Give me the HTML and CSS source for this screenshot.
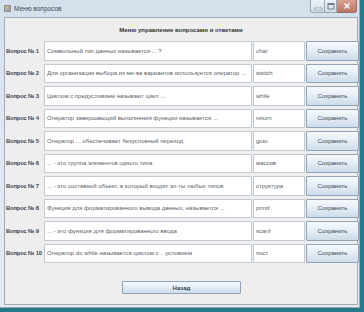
FILE: index.html
```html
<!DOCTYPE html>
<html>
<head>
<meta charset="utf-8">
<title>Меню вопросов</title>
<link rel="stylesheet" href="styles.css">
</head>
<body>
<div class="window">
  <div class="titlebar">
    <span class="app-icon"></span>
    <span class="title">Меню вопросов</span>
    <div class="caption">
      <span class="cb min"><svg width="15" height="13" viewBox="0 0 15 13"><rect x="4" y="8" width="7" height="2" fill="#fff" stroke="#6f7f90" stroke-width="0.6"/></svg></span>
      <span class="cb max"><svg width="12" height="13" viewBox="0 0 12 13"><rect x="3" y="3.5" width="6" height="5.5" fill="none" stroke="#6f7f90" stroke-width="1"/><rect x="3" y="3.5" width="6" height="1.5" fill="#6f7f90"/></svg></span>
      <span class="cb close"><svg width="20" height="13" viewBox="0 0 20 13"><path d="M7.5 3.5 L12.5 8.5 M12.5 3.5 L7.5 8.5" stroke="#fff" stroke-width="1.4"/></svg></span>
    </div>
  </div>
  <div class="client">
    <div class="heading">Меню управление вопросами и ответами</div>
    <div class="grid">
      <div class="label">Вопрос № 1</div><div class="field">Символьный тип данных называется ... ?</div><div class="field">char</div><button class="save">Сохранить</button>
      <div class="label">Вопрос № 2</div><div class="field">Для организации выбора из мн-ва вариантов используется оператор ...</div><div class="field">switch</div><button class="save">Сохранить</button>
      <div class="label">Вопрос № 3</div><div class="field">Циклом с предусловием называют цикл ...</div><div class="field">while</div><button class="save">Сохранить</button>
      <div class="label">Вопрос № 4</div><div class="field">Оператор завершающий выполнения функции называется ...</div><div class="field">return</div><button class="save">Сохранить</button>
      <div class="label">Вопрос № 5</div><div class="field">Оператор ... обеспечивает безусловный переход</div><div class="field">goto</div><button class="save">Сохранить</button>
      <div class="label">Вопрос № 6</div><div class="field">... - это группа элементов одного типа</div><div class="field">массив</div><button class="save">Сохранить</button>
      <div class="label">Вопрос № 7</div><div class="field">... - это составной объект, в который входят эл-ты любых типов</div><div class="field">структура</div><button class="save">Сохранить</button>
      <div class="label">Вопрос № 8</div><div class="field">Функция для форматированного вывода данных, называется ...</div><div class="field">printf</div><button class="save">Сохранить</button>
      <div class="label">Вопрос № 9</div><div class="field">... - это функция для форматированного ввода</div><div class="field">scanf</div><button class="save">Сохранить</button>
      <div class="label">Вопрос № 10</div><div class="field">Оператор do while называется циклом с ...условием</div><div class="field">пост</div><button class="save">Сохранить</button>
    </div>
    <div class="footer"><button class="back">Назад</button></div>
  </div>
</div>
</body>
</html>
```

FILE: styles.css
```css
* { box-sizing: border-box; }
html, body {
  margin: 0;
  padding: 0;
  width: 364px;
  height: 312px;
  overflow: hidden;
  background: #24798c;
  font-family: "Liberation Sans", Arial, sans-serif;
}
.window {
  width: 360px;
  height: 308px;
  background: linear-gradient(180deg, #d3e0ec 0%, #dfe8f1 40%, #e3eaf2 100%);
  display: flex;
  flex-direction: column;
  border-right: 1px solid #9aa6b3;
  border-bottom: 1px solid #9aa6b3;
}
.titlebar {
  height: 17px;
  flex: none;
  display: flex;
  align-items: center;
  padding-left: 4px;
  position: relative;
}
.app-icon {
  width: 7px;
  height: 7px;
  background: linear-gradient(135deg, #d9b98a, #8e9fb3);
  border: 1px solid #8f8f8f;
  margin-right: 3px;
}
.title {
  font-size: 6.5px;
  color: #3d4a57;
}
.caption {
  position: absolute;
  right: 2px;
  top: 0;
  display: flex;
}
.cb {
  display: block;
  height: 13px;
  border: 1px solid #9aa8b8;
  border-top: none;
}
.cb svg { display: block; }
.min {
  width: 15px;
  border-radius: 0 0 0 3px;
  background: linear-gradient(180deg, #edf2f7, #d2dde8);
}
.max {
  width: 12px;
  border-left: none;
  background: linear-gradient(180deg, #edf2f7, #d2dde8);
}
.close {
  width: 20px;
  border-left: none;
  border-radius: 0 0 3px 0;
  border-color: #9a6f66;
  background: linear-gradient(180deg, #d6a294, #bd7563);
}
.client {
  flex: 1;
  margin: 0 1px 2px 4px;
  background: #eeeeee;
  border: 1px solid #a4acb5;
  display: flex;
  flex-direction: column;
}
.heading {
  height: 23px;
  flex: none;
  display: flex;
  align-items: center;
  justify-content: center;
  font-size: 6px;
  font-weight: bold;
  color: #333;
}
.grid {
  display: grid;
  grid-template-columns: 38px 208px 52px 53px;
  grid-auto-rows: 19.5px;
  column-gap: 1px;
  row-gap: 3px;
}
.label {
  font-size: 5.8px;
  letter-spacing: -0.15px;
  font-weight: bold;
  color: #3a4450;
  display: flex;
  align-items: center;
  white-space: nowrap;
  padding-left: 1px;
}
.field {
  background: #ffffff;
  border: 1px solid #c3cad2;
  font-size: 6px;
  color: #5a6168;
  display: flex;
  align-items: center;
  padding-left: 2px;
  white-space: nowrap;
  overflow: hidden;
}
.save, .back {
  font-family: "Liberation Sans", Arial, sans-serif;
  font-size: 6px;
  color: #3a4450;
  border: 1px solid #90a3b7;
  border-radius: 1px;
  background: linear-gradient(180deg, #f6f9fb 0%, #e6eef6 45%, #cddcea 100%);
  padding: 0;
  margin: 0;
}
.footer {
  display: flex;
  justify-content: center;
  margin-top: 18px;
  padding-left: 1px;
}
.back {
  width: 119px;
  height: 13px;
  font-weight: bold;
}
```
